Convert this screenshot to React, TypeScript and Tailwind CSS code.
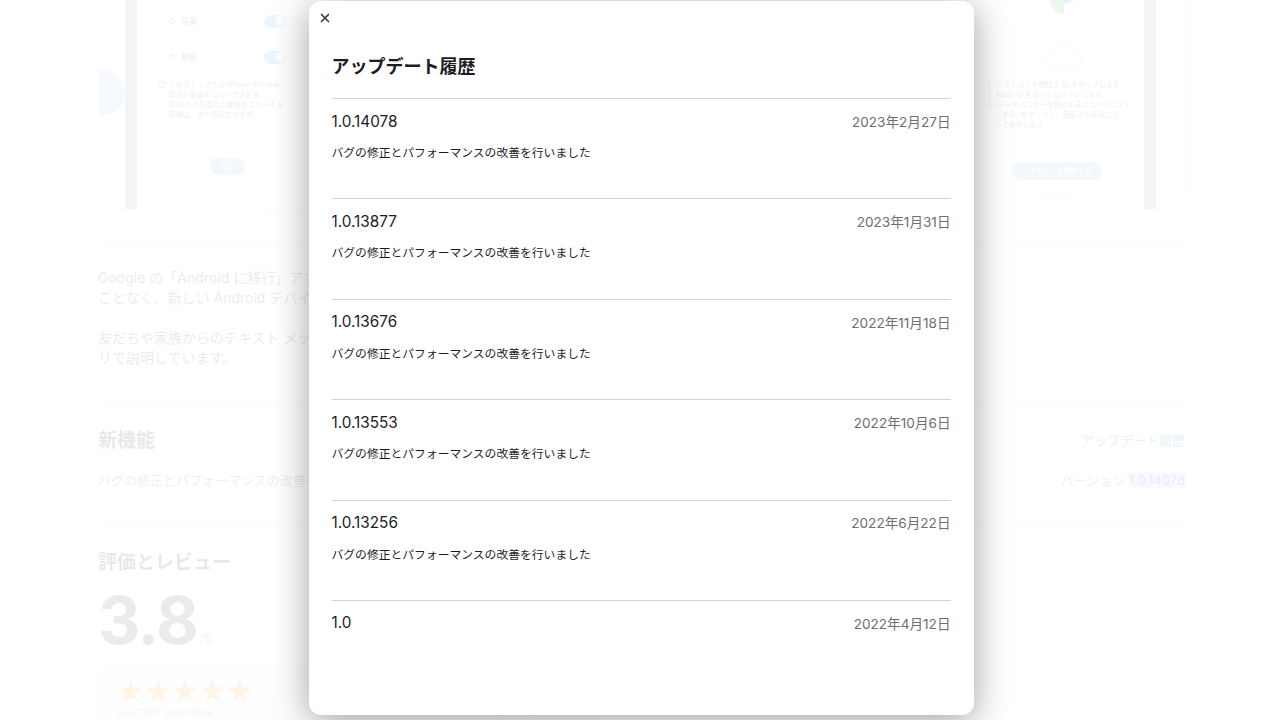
import { X } from "lucide-react";

const FONT = { fontFamily: '"Inter", "Noto Sans CJK JP", sans-serif' };

const updates = [
  { version: "1.0.14078", date: "2023年2月27日", note: "バグの修正とパフォーマンスの改善を行いました" },
  { version: "1.0.13877", date: "2023年1月31日", note: "バグの修正とパフォーマンスの改善を行いました" },
  { version: "1.0.13676", date: "2022年11月18日", note: "バグの修正とパフォーマンスの改善を行いました" },
  { version: "1.0.13553", date: "2022年10月6日", note: "バグの修正とパフォーマンスの改善を行いました" },
  { version: "1.0.13256", date: "2022年6月22日", note: "バグの修正とパフォーマンスの改善を行いました" },
  { version: "1.0", date: "2022年4月12日", note: "" },
];

// small toggle used inside the faded screenshot
const Toggle = () => (
  <div className="w-[22px] h-[13px] rounded-full bg-[#34a0ff] flex items-center justify-end px-[1.5px]">
    <div className="w-[10px] h-[10px] rounded-full bg-white" />
  </div>
);

const Background = () => (
  <div className="w-[1087px] ml-[98px] text-[#1d1d1f]">
    {/* screenshots */}
    <div className="flex gap-[28px] h-[210px]">
      <div className="relative w-[470px] h-[210px] flex rounded-b-[18px] border border-t-0 border-[#e5e5ea] overflow-hidden">
        <div className="absolute -left-[22px] top-[70px] w-[48px] h-[46px] rounded-full bg-[#a9c8fb]" />
        <div className="w-[26px]" />
        <div className="w-[12px] h-full bg-[#8e8e8e]" />
        <div className="flex-1 flex flex-col pl-[32px] pr-[281px] pt-[12px]">
          <div className="flex items-center justify-between h-[18px]">
            <div className="flex items-center gap-[6px] text-[8px] text-[#333]">
              <span className="w-[6px] h-[6px] rounded-full border border-[#666]" />
              写真
            </div>
            <Toggle />
          </div>
          <div className="flex items-center justify-between h-[18px] mt-[18px]">
            <div className="flex items-center gap-[6px] text-[8px] text-[#333]">
              <span className="w-[6px] h-[6px] rounded-full border border-[#666]" />
              動画
            </div>
            <Toggle />
          </div>
          <div className="flex gap-[3px] mt-[14px] -ml-[10px] text-[7px] leading-[10px] text-[#555]">
            <span className="w-[7px] h-[7px] rounded-full border border-[#555] shrink-0 mt-[1px]" />
            <p>このステップでは iPhone からのみ写真と動画をコピーできます。iCloud から写真と動画をコピーする手順は、後で表示されます。</p>
          </div>
          <div className="mt-[38px] self-center w-[35px] h-[17px] rounded-full bg-[#8fb8fa] text-white text-[7px] flex items-center justify-center">
            続行
          </div>
        </div>
      </div>
      <div className="relative w-[589px] h-[210px] flex justify-end rounded-b-[18px] border border-t-0 border-[#e5e5ea] overflow-hidden">
        <div className="w-[160px] flex flex-col items-center">
          <div className="flex -mt-[10px]">
            <div className="w-[14px] h-[24px] rounded-bl-full bg-[#34a853]" />
            <div className="w-[14px] h-[14px] rounded-br-full bg-[#4285f4]" />
          </div>
          <svg width="40" height="36" viewBox="0 0 40 36" className="mt-[22px]">
            <path d="M10 32 H30 A8 8 0 0 0 30 16 A10 10 0 0 0 11 14 A9 9 0 0 0 10 32 Z" fill="none" stroke="#bbb" strokeWidth="1" />
          </svg>
          <ol className="self-start pl-[3px] mt-[8px] text-[7px] leading-[10px] text-[#555]">
            <li>1. [リクエストを開始する] をタップします</li>
            <li>2. Apple ID を使ってログインします</li>
            <li>3. [データのコピーを移行するようリクエスト</li>
            <li className="pl-[8px]">トする] をタップし、画面上の手順に沿</li>
            <li className="pl-[8px]">って操作します</li>
          </ol>
          <div className="mt-[32px] mr-[14px] w-[90px] h-[18px] rounded-full bg-[#8fb8fa] text-white text-[7px] flex items-center justify-center">
            リクエストを開始する
          </div>
          <div className="mt-[10px] mr-[14px] text-[7px] text-[#8fb8fa]">スキップ</div>
        </div>
        <div className="w-[12px] h-full bg-[#8e8e8e]" />
        <div className="w-[28px]" />
      </div>
    </div>

    {/* description */}
    <div className="mt-[35px] border-t border-[#d2d2d7] pt-[22px] text-[14px] leading-[20px] text-[#333]">
      <p>Google の「Android に移行」アプリを使えば、大切なデータを失う</p>
      <p>ことなく、新しい Android デバイスにすばやく移行できます。</p>
      <p className="mt-[20px]">友だちや家族からのテキスト メッセージ、写真、動画などを移行する方法をアプ</p>
      <p>リで説明しています。</p>
    </div>

    {/* what's new */}
    <div className="mt-[37px] border-t border-[#d2d2d7] pt-[22px]">
      <div className="flex items-center justify-between">
        <h2 className="text-[19px] leading-[26px] font-bold">新機能</h2>
        <span className="text-[13px] text-[#0066cc]">アップデート履歴</span>
      </div>
      <div className="flex items-center justify-between mt-[16px] text-[13px] leading-[20px] text-[#555]">
        <p>バグの修正とパフォーマンスの改善を行いました</p>
        <p>
          バージョン <span className="bg-[#b3d7ff] text-[#333]">1.0.14078</span>
        </p>
      </div>
    </div>

    {/* ratings */}
    <div className="mt-[35px] border-t border-[#d2d2d7] pt-[24px]">
      <h2 className="text-[19px] leading-[26px] font-bold">評価とレビュー</h2>
      <div className="flex items-end mt-[13px]">
        <span className="text-[66px] leading-[62px] font-bold tracking-tight text-[#333]">3.8</span>
        <span className="text-[13px] text-[#888] ml-[2px] mb-[2px]">/5</span>
      </div>
      <div className="mt-[14px] w-[500px] h-[80px] rounded-t-[14px] bg-[#f5f5f7] px-[18px] pt-[12px]">
        <div className="text-[28px] leading-[30px] tracking-[-2px] text-[#ff9f0a]">★★★★★</div>
        <div className="flex justify-between text-[9px] leading-[10px] text-[#888] mt-[1px]">
          <span>りんご好き 2022/04/14</span>
          <span>移行がスムーズにできました</span>
        </div>
      </div>
    </div>
  </div>
);

export default function App() {
  return (
    <div className="relative w-[1280px] h-[720px] overflow-hidden bg-white" style={FONT}>
      <Background />

      {/* dim layer + modal */}
      <div className="absolute inset-0 bg-white/90 flex justify-center">
        <div className="mt-px ml-[2px] w-[665px] h-[714px] bg-white rounded-[12px] shadow-[0_6px_36px_rgba(0,0,0,0.38)] relative">
          <button className="absolute left-[8px] top-[9px] w-[16px] h-[16px] flex items-center justify-center text-[#424245]">
            <X size={14} strokeWidth={3} />
          </button>
          <div className="px-[23px] pt-[52px]">
            <h1 className="text-[18px] leading-[28px] font-bold text-[#1d1d1f]">アップデート履歴</h1>
            <ul className="mt-[17px]">
              {updates.map((u) => (
                <li key={u.version} className="h-[100.4px] border-t border-[#d2d2d7] pt-[12px]">
                  <div className="flex items-center justify-between h-[22px]">
                    <span className="text-[15.3px] text-[#1d1d1f]">{u.version}</span>
                    <span className="text-[13.6px] text-[#6e6e73]">{u.date}</span>
                  </div>
                  {u.note && (
                    <p className="mt-[10px] text-[11.8px] leading-[20px] text-[#1d1d1f]">{u.note}</p>
                  )}
                </li>
              ))}
            </ul>
          </div>
        </div>
      </div>
    </div>
  );
}
